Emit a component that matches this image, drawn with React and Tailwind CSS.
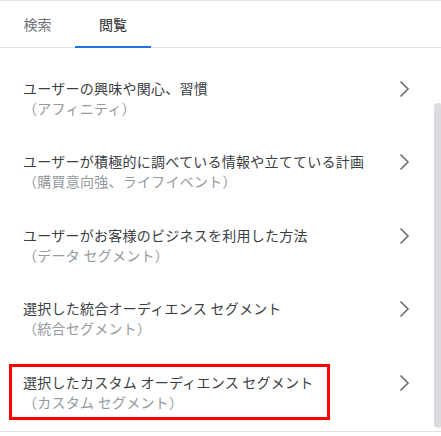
import React from "react";

const items = [
  { title: "ユーザーの興味や関心、習慣", sub: "（アフィニティ）" },
  { title: "ユーザーが積極的に調べている情報や立てている計画", sub: "（購買意向強、ライフイベント）" },
  { title: "ユーザーがお客様のビジネスを利用した方法", sub: "（データ セグメント）" },
  { title: "選択した統合オーディエンス セグメント", sub: "（統合セグメント）" },
  { title: "選択したカスタム オーディエンス セグメント", sub: "（カスタム セグメント）", marked: true },
];

function Chevron() {
  return (
    <svg width="11" height="18" viewBox="0 0 11 18" className="shrink-0">
      <polyline points="1.5,1.5 9,9 1.5,16.5" fill="none" stroke="#6b6f73" strokeWidth="1.6" />
    </svg>
  );
}

export default function App() {
  return (
    <div
      className="w-[441px] h-[436px] bg-white relative overflow-hidden"
      style={{ fontFamily: '"Noto Sans CJK JP", "Noto Sans", sans-serif' }}
    >
      <div className="border-t border-[#e3e3e3] h-[48px] flex border-b border-b-[#e0e0e0]">
        <div className="w-[75px] flex items-center justify-center text-[14px] text-[#6f7378]">検索</div>
        <div className="w-[76px] flex items-center justify-center text-[14px] text-[#2a2c2f] relative">
          閲覧
          <div className="absolute left-0 right-0 bottom-[-1px] h-[2px] bg-[#1a73e8]" />
        </div>
      </div>
      <div className="relative h-[384px] border-b border-[#e0e0e0] pt-[13px]">
        {items.map((it, i) => (
          <div key={i} className="flex items-start pl-[23px] pr-[31px] py-[16.75px]">
            <div className="flex-1 relative leading-[20px] text-[14px] tracking-[0.25px]">
              {it.marked && (
                <div className="absolute left-[-14px] top-[-8px] w-[321px] h-[56px] border-[3px] border-[#ff0000]" />
              )}
              <div className="text-[#3c4043]">{it.title}</div>
              <div className="text-[#95999e]">{it.sub}</div>
            </div>
            <div className="pt-[2px]">
              <Chevron />
            </div>
          </div>
        ))}
        <div className="absolute right-0 top-[55px] bottom-[3px] w-[7px] rounded-l-[4px] rounded-r-[2px] bg-[#dadce0]" />
      </div>
    </div>
  );
}
